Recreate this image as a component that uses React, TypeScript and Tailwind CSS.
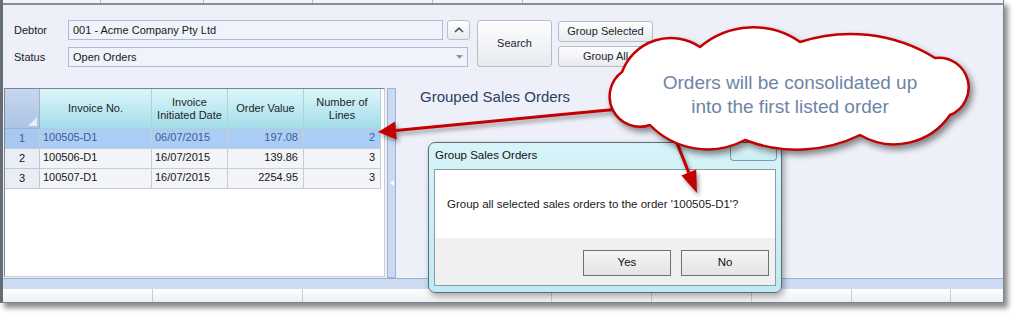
import React from 'react';

type Row = { n: number; inv: string; date: string; value: string; lines: number };

const rows: Row[] = [
    { n: 1, inv: '100505-D1', date: '06/07/2015', value: '197.08', lines: 2 },
    { n: 2, inv: '100506-D1', date: '16/07/2015', value: '139.86', lines: 3 },
    { n: 3, inv: '100507-D1', date: '16/07/2015', value: '2254.95', lines: 3 },
];

const topCols = [98, 103, 109, 120, 90];
const bottomCols = [150, 150, 249, 100, 100, 100, 99];

const WinButton: React.FC<{ label: string; className?: string }> = ({ label, className }) => (
    <div className={`flex items-center justify-center rounded-[3px] border border-[#b6bdc7] bg-linear-to-b from-[#fdfdfd] to-[#e8ebef] text-[11px] text-[#1c2430] ${className ?? ''}`}>
        {label}
    </div>
);

const OrdersGrid: React.FC = () => (
    <div className="w-[381px] h-[189px] ml-[1px] flex flex-col bg-white border border-[#c9ced6] border-l-[#7d858e] border-t-[#7d858e]">
        {/* header */}
        <div className="flex h-[40px] text-[11px] leading-[13px] text-[#1e1e1e]">
            <div className="relative w-[35px] border-r border-b border-[#9fb3cf] bg-linear-to-b from-[#c6d7ef] to-[#adc3e6]">
                <svg className="absolute right-[2px] bottom-[2px]" width="9" height="9" viewBox="0 0 9 9">
                    <polygon points="9,0 9,9 0,9" fill="#e6eef8" />
                </svg>
            </div>
            <div className="w-[112px] flex items-center justify-center border-r border-b border-[#b5cfd8] bg-linear-to-b from-[#dcf6fa] to-[#a3dde9]">Invoice No.</div>
            <div className="w-[76px] flex items-center justify-center text-center border-r border-b border-[#b5cfd8] bg-linear-to-b from-[#dcf6fa] to-[#a3dde9]">Invoice<br />Initiated Date</div>
            <div className="w-[76px] flex items-center justify-center border-r border-b border-[#b5cfd8] bg-linear-to-b from-[#dcf6fa] to-[#a3dde9]">Order Value</div>
            <div className="w-[77px] flex items-center justify-center text-center border-r border-b border-[#b5cfd8] bg-linear-to-b from-[#dcf6fa] to-[#a3dde9]">Number of<br />Lines</div>
        </div>
        {rows.map(r => {
            const sel = r.n === 1;
            return (
                <div key={r.n} className={`flex h-[20px] text-[11px] ${sel ? 'text-[#3e5d8e]' : 'text-[#161616]'}`}>
                    <div className={`w-[35px] flex items-center justify-center border-r border-b border-[#c2c9d3] ${sel ? 'bg-[#a8c8f0]' : 'bg-[#e9edf5]'}`}>{r.n}</div>
                    <div className={`w-[112px] flex items-center pl-[3px] pb-[2px] border-r border-b border-[#c8cdd4] ${sel ? 'bg-[#aacdf5]' : 'bg-[#f2f4f8]'}`}>{r.inv}</div>
                    <div className={`w-[76px] flex items-center pl-[3px] pb-[2px] border-r border-b border-[#c8cdd4] ${sel ? 'bg-[#aacdf5]' : 'bg-[#f2f4f8]'}`}>{r.date}</div>
                    <div className={`w-[76px] flex items-center justify-end pr-[5px] pb-[2px] border-r border-b border-[#c8cdd4] ${sel ? 'bg-[#aacdf5]' : 'bg-[#f2f4f8]'}`}>{r.value}</div>
                    <div className={`w-[77px] flex items-center justify-end pr-[5px] pb-[2px] border-r border-b border-[#c8cdd4] ${sel ? 'bg-[#aacdf5]' : 'bg-[#f2f4f8]'}`}>{r.lines}</div>
                </div>
            );
        })}
    </div>
);

const App: React.FC = () => {
    return (
        <div className="relative w-[1020px] h-[318px] bg-white overflow-hidden font-['Liberation_Sans',Arial,sans-serif]">
            {/* window frame */}
            <div className="w-[1004px] h-[303px] flex flex-col bg-[#edf0f8] border-[#7a828b] border-l-[3px] border-l-[#656c74] border-r border-b shadow-[4px_5px_5px_rgba(0,0,0,0.45)]">
                {/* previous grid strip */}
                <div className="h-[3px] flex bg-[#f3f4f6]">
                    {topCols.map((w, i) => (
                        <div key={i} className="h-full border-r border-[#b9bec5]" style={{ width: w }} />
                    ))}
                </div>
                <div className="h-[2px] bg-[#878e97]" />

                {/* filter area */}
                <div className="h-[82px] flex pt-[15px] text-[11px] text-[#1a1a1a]">
                    <div className="ml-[11px] w-[456px] flex flex-col gap-[7px]">
                        <div className="flex h-[20px] items-center">
                            <span className="w-[54px]">Debtor</span>
                            <div className="w-[375px] h-[20px] flex items-center px-[4px] border border-[#abbbd8] bg-[#f0f3fa]">001 - Acme Company Pty Ltd</div>
                            <div className="ml-[4px] w-[23px] h-[20px] flex items-center justify-center rounded-[3px] border border-[#b9c0ca] bg-linear-to-b from-white to-[#e8ebf0]">
                                <svg width="10" height="6" viewBox="0 0 10 6">
                                    <path d="M1 5 L5 1.2 L9 5" fill="none" stroke="#4a4f56" strokeWidth="1.6" />
                                </svg>
                            </div>
                        </div>
                        <div className="flex h-[20px] items-center">
                            <span className="w-[54px]">Status</span>
                            <div className="w-[400px] h-[20px] flex items-center justify-between pl-[4px] pr-[4px] border border-[#abbbd8] bg-[#f0f3fa]">
                                <span>Open Orders</span>
                                <svg width="7" height="4" viewBox="0 0 7 4">
                                    <polygon points="0,0 7,0 3.5,4" fill="#a88aa6" />
                                </svg>
                            </div>
                        </div>
                    </div>
                    <WinButton label="Search" className="ml-[7px] w-[75px] h-[47px]" />
                    <div className="ml-[6px] mt-[1px] flex flex-col gap-[4px]">
                        <WinButton label="Group Selected" className="w-[95px] h-[21px]" />
                        <WinButton label="Group All" className="w-[95px] h-[21px]" />
                    </div>
                </div>

                {/* main area */}
                <div className="h-[191px] flex pt-[1px]">
                    <OrdersGrid />
                    <div className="ml-[2px] w-[9px] h-[190px] flex items-center justify-center bg-[#c9dbf2] border border-[#9db3d1]">
                        <svg width="4" height="6" viewBox="0 0 4 6">
                            <polygon points="4,0 4,6 0,3" fill="#ffffff" />
                        </svg>
                    </div>
                    <div className="flex-1 pl-[24px]">
                        <div className="text-[15px] leading-[18px] text-[#2b3f5e]">Grouped Sales Orders</div>
                    </div>
                </div>

                {/* splitter bar */}
                <div className="h-[11px] bg-[#cbdcf3] border-t border-[#9bb1cf]" />

                {/* bottom grid header */}
                <div className="h-[13px] flex bg-linear-to-b from-white to-[#eeeff1] overflow-hidden">
                    {bottomCols.map((w, i) => (
                        <div key={i} className="h-full border-r border-[#c9cbcf] overflow-hidden" style={{ width: w }}>
                            {i === 4 && <div className="mt-[11px] text-center text-[11px] leading-[13px] text-[#1a1a1a]">Quantity Back</div>}
                        </div>
                    ))}
                </div>
            </div>

            {/* dialog */}
            <div className="absolute left-[428px] top-[142px] w-[354px] h-[151px] rounded-[7px] border border-[#5f6a75] bg-linear-to-b from-[#d6f4f9] to-[#bfeaf3] shadow-[2px_3px_6px_rgba(0,0,0,0.35)] flex flex-col">
                <div className="h-[26px] flex items-center pl-[6px] text-[11.5px] text-[#111]">Group Sales Orders</div>
                <div className="absolute right-[4px] top-0 w-[47px] h-[18px] rounded-b-[4px] border border-[#8a98a6] border-t-0 bg-linear-to-b from-[#e2f7fb] to-[#c9eef5]" />
                <div className="mx-[5px] mb-[6px] flex-1 flex flex-col border border-[#8d9ba8]">
                    <div className="h-[68px] bg-white flex items-center pl-[12px] pt-[2px] text-[11.5px] text-[#1a1a1a]">
                        Group all selected sales orders to the order '100505-D1'?
                    </div>
                    <div className="flex-1 bg-[#f0f0f0] flex justify-end items-start gap-[10px] pt-[12px] pr-[6px]">
                        <div className="w-[88px] h-[26px] flex items-center justify-center border border-[#707070] bg-linear-to-b from-[#f4f4f4] to-[#e4e4e4] text-[11.5px] text-[#111]">Yes</div>
                        <div className="w-[88px] h-[26px] flex items-center justify-center border border-[#707070] bg-linear-to-b from-[#f4f4f4] to-[#e4e4e4] text-[11.5px] text-[#111]">No</div>
                    </div>
                </div>
            </div>

            {/* callout arrows */}
            <svg className="absolute left-0 top-0 pointer-events-none drop-shadow-[2px_3px_2px_rgba(0,0,0,0.4)]" width="1020" height="318" viewBox="0 0 1020 318">
                <line x1="630" y1="108" x2="395.9" y2="130.4" stroke="#c40000" strokeWidth="3" />
                <polygon points="378,132 395.1,121.4 396.7,139.4" fill="#c40000" />
                <line x1="663" y1="108" x2="688.8" y2="172.6" stroke="#c40000" strokeWidth="3" />
                <polygon points="697,193 681.4,175.6 696.2,169.6" fill="#c40000" />
            </svg>

            {/* cloud callout */}
            <div className="absolute left-[595px] top-[20px] w-[390px] h-[140px]">
                <svg className="absolute left-0 top-0 overflow-visible drop-shadow-[3px_4px_3px_rgba(0,0,0,0.45)]" width="390" height="140" viewBox="0 0 390 140">
                    <path
                        d="M27 52 A52 52 0 0 1 105 27 A82 82 0 0 1 205 22 A161.6 161.6 0 0 1 340 38 A29.7 29.7 0 0 1 355 95 A67.8 67.8 0 0 1 265 115 A143.75 143.75 0 0 1 150 120 A80 80 0 0 1 55 105 A30.3 30.3 0 0 1 27 52 Z"
                        fill="#ffffff"
                        stroke="#c40000"
                        strokeWidth="2.5"
                        strokeLinejoin="round"
                    />
                </svg>
                <div className="relative flex justify-center pt-[51px] text-center text-[19px] leading-[24px] text-[#6e84a6]">
                    Orders will be consolidated up
                    <br />
                    into the first listed order
                </div>
            </div>
        </div>
    );
};

export default App;
